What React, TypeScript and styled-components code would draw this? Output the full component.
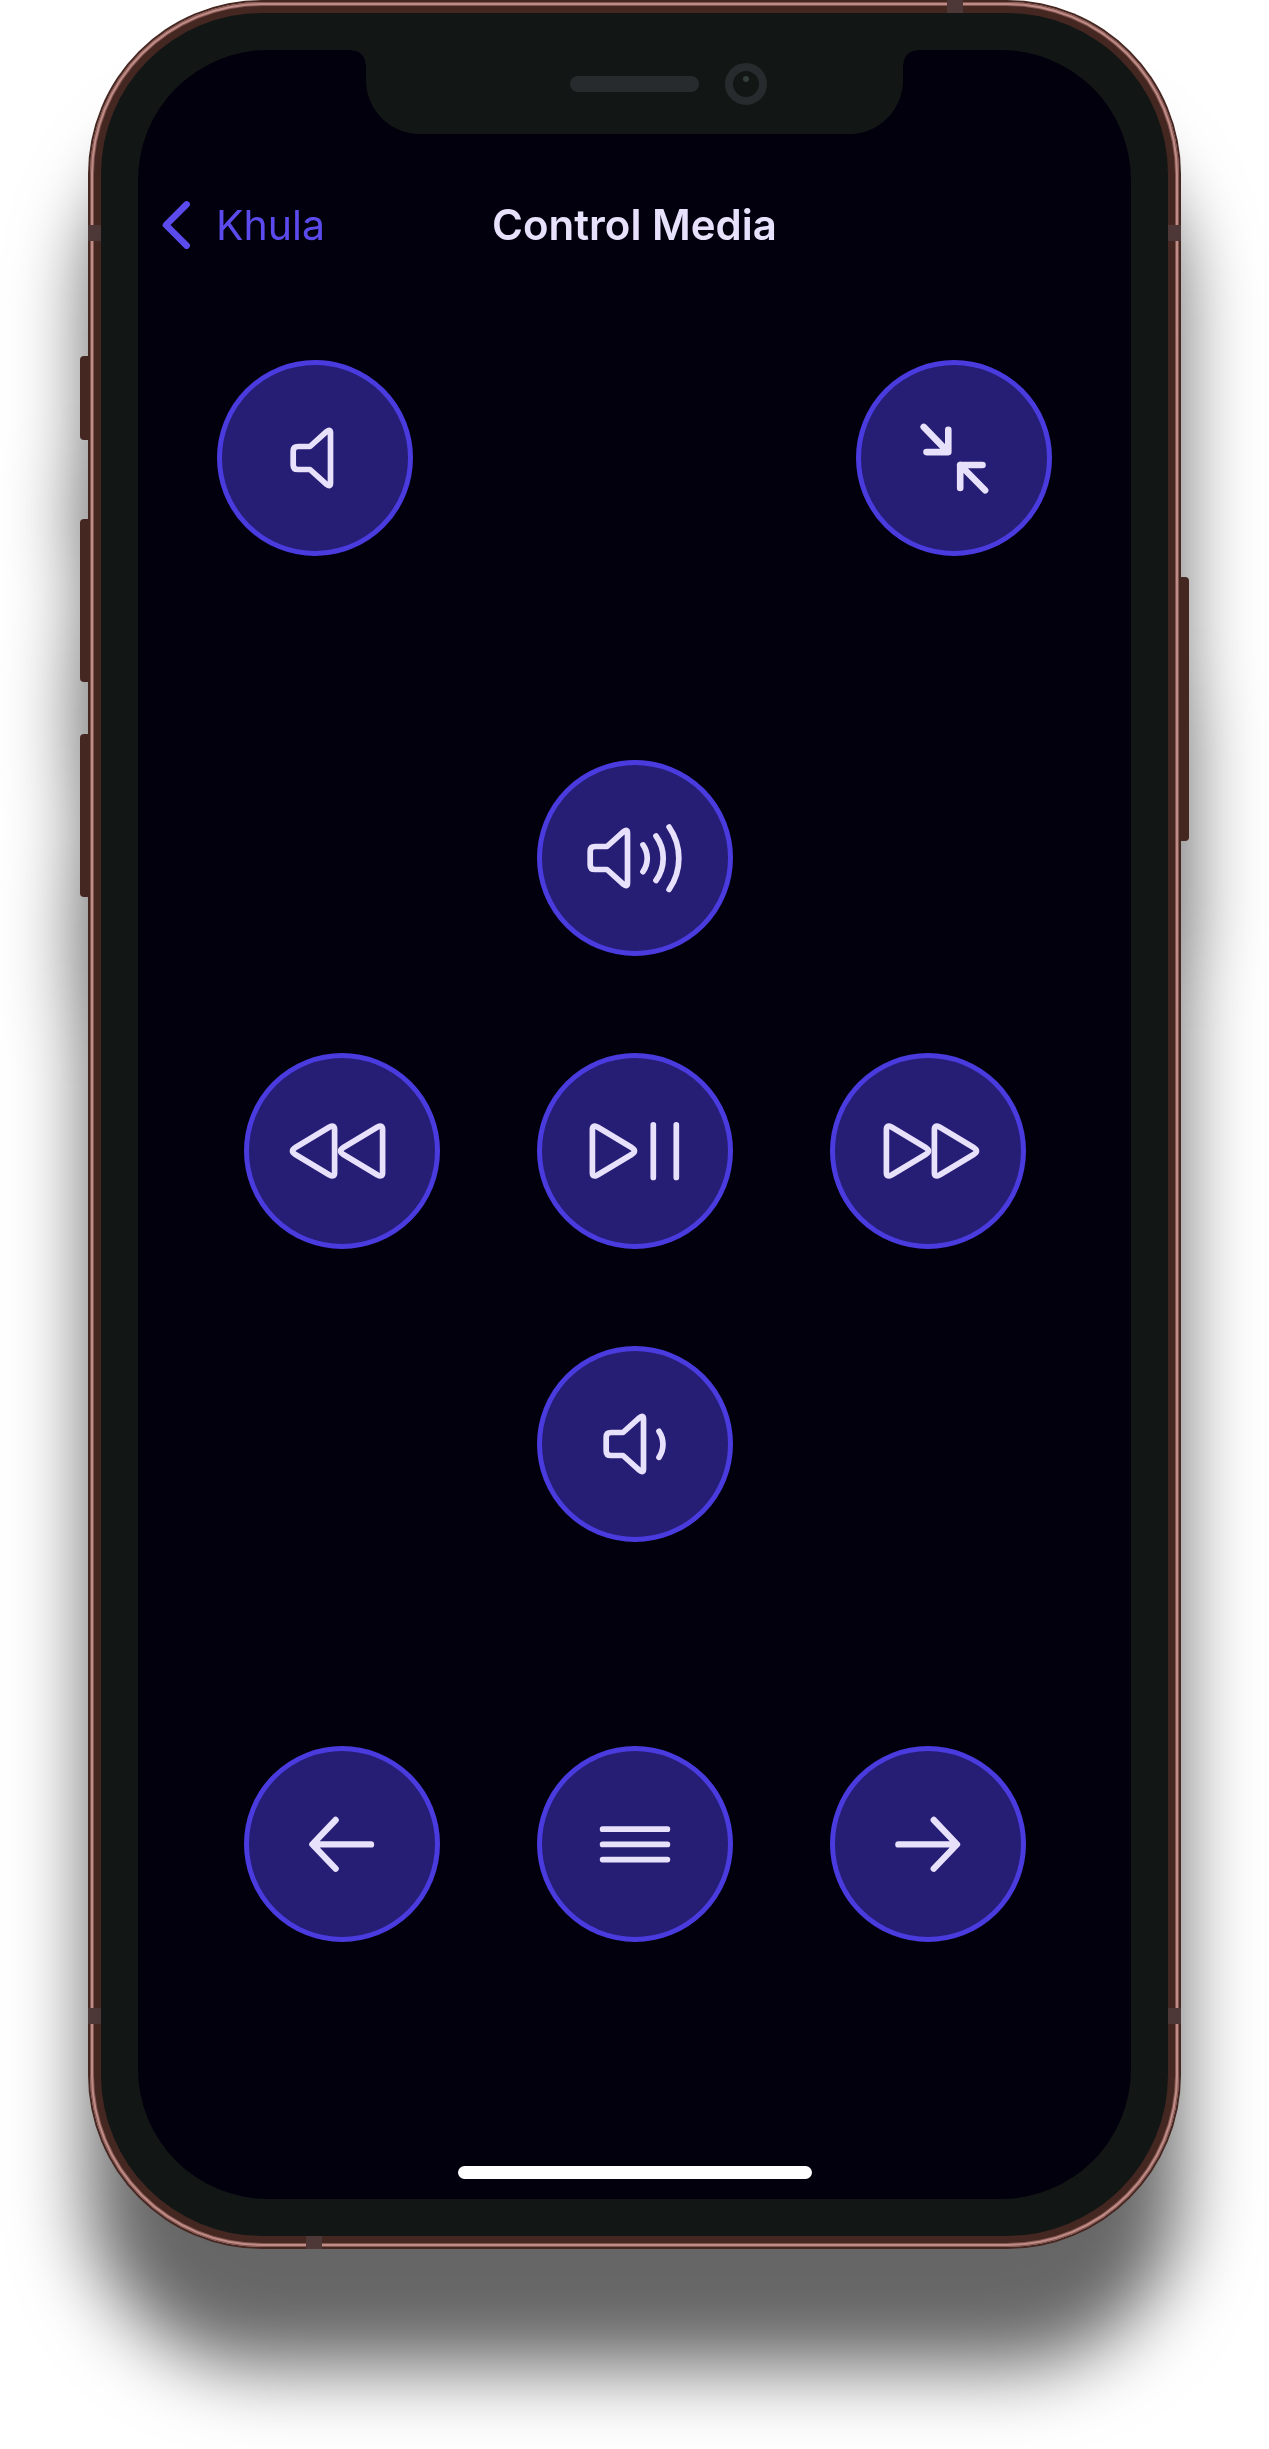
import React from "react";
import styled, { createGlobalStyle } from "styled-components";

const color = {
  screen: "#02000d",
  bezel: "#121716",
  frame: "#452722",
  frameMid: "#83554f",
  frameShine: "#c08c87",
  band: "#4d3737",
  sensor: "#272b2d",
  accent: "#5b4bec",
  ring: "#4a3bdf",
  fill: "#261d75",
  ink: "#e7e1fc",
};

const GlobalStyle = createGlobalStyle`
  *, *::before, *::after { box-sizing: border-box; }
  body {
    margin: 0;
    background: #fff;
    font-family: Inter, "Liberation Sans", sans-serif;
  }
`;

const Stage = styled.div`
  padding: 0 88px 200px;
  overflow: hidden;
`;

const Phone = styled.div`
  position: relative;
  padding: 13px;
  border-radius: 174px;
  background: ${color.frame};
  filter: drop-shadow(0 118px 38px rgba(0, 0, 0, 0.6));
`;

const Shine = styled.div`
  position: absolute;
  inset: 2px;
  border-radius: 172px;
  box-shadow:
    inset 0 0 0 1px ${color.frameMid},
    inset 0 0 0 3px ${color.frameShine},
    inset 0 0 0 4px ${color.frameMid};
`;

const SideKey = styled.span<{ $side: "left" | "right"; $top: number; $length: number }>`
  position: absolute;
  ${(p) => p.$side}: -8px;
  top: ${(p) => p.$top}px;
  width: 8px;
  height: ${(p) => p.$length}px;
  background: ${color.frame};
  border-radius: ${(p) => (p.$side === "left" ? "4px 0 0 4px" : "0 4px 4px 0")};
`;

const SideBand = styled.span<{ $side: "left" | "right"; $end: "top" | "bottom" }>`
  position: absolute;
  ${(p) => p.$side}: 0;
  ${(p) => p.$end}: 225px;
  width: 13px;
  height: 16px;
  background: ${color.band};
`;

const EdgeBand = styled.span<{ $side: "left" | "right"; $end: "top" | "bottom" }>`
  position: absolute;
  ${(p) => p.$end}: 0;
  ${(p) => p.$side}: 218px;
  width: 16px;
  height: 13px;
  background: ${color.band};
`;

const Bezel = styled.div`
  position: relative;
  padding: 37px;
  border-radius: 161px;
  background: ${color.bezel};
`;

const Screen = styled.div`
  display: flex;
  flex-direction: column;
  padding-bottom: 20px;
  border-radius: 130px;
  background: ${color.screen};
`;

const Notch = styled.div`
  position: relative;
  align-self: center;
  display: grid;
  grid-template-columns: 1fr auto 1fr;
  align-items: center;
  column-gap: 26px;
  width: 537px;
  height: 84px;
  padding-bottom: 16px;
  border-radius: 0 0 54px 54px;
  background: ${color.bezel};

  &::before,
  &::after {
    content: "";
    position: absolute;
    top: 0;
    width: 14px;
    height: 14px;
  }
  &::before {
    right: 100%;
    background: radial-gradient(circle at 0 100%, transparent 13px, ${color.bezel} 14px);
  }
  &::after {
    left: 100%;
    background: radial-gradient(circle at 100% 100%, transparent 13px, ${color.bezel} 14px);
  }
`;

const Speaker = styled.span`
  grid-column: 2;
  width: 129px;
  height: 16px;
  border-radius: 8px;
  background: ${color.sensor};
`;

const Camera = styled.span`
  display: flex;
  justify-content: center;
  width: 42px;
  height: 42px;
  padding-top: 5px;
  border: 8px solid ${color.sensor};
  border-radius: 50%;

  &::after {
    content: "";
    width: 6px;
    height: 6px;
    border-radius: 50%;
    background: #333d3b;
  }
`;

const Header = styled.header`
  display: grid;
  grid-template-columns: 1fr auto 1fr;
  align-items: center;
  height: 90px;
  margin-top: 46px;
  padding: 0 24px;
  line-height: 50px;
`;

const BackLink = styled.a`
  display: flex;
  align-items: center;
  gap: 26px;
  font-size: 41px;
  color: ${color.accent};
  text-decoration: none;
`;

const Title = styled.h1`
  margin: 0;
  font-size: 42px;
  font-weight: 600;
  color: ${color.ink};
`;

const Pad = styled.main`
  display: flex;
  flex-direction: column;
  gap: 204px;
  padding: 90px 79px 224px;
`;

const Corners = styled.div`
  display: flex;
  justify-content: space-between;
`;

const Cross = styled.div`
  display: flex;
  flex-direction: column;
  gap: 97px;
`;

const Row = styled.div`
  display: flex;
  justify-content: center;
  gap: 97px;
`;

const RoundButton = styled.button`
  display: flex;
  flex: none;
  align-items: center;
  justify-content: center;
  width: 196px;
  height: 196px;
  padding: 0;
  border: 5px solid ${color.ring};
  border-radius: 50%;
  background: ${color.fill};
  color: ${color.ink};
  cursor: pointer;
`;

const HomeBar = styled.div`
  align-self: center;
  width: 354px;
  height: 13px;
  border-radius: 7px;
  background: #fff;
`;

const Strokes = styled.svg<{ $weight: number }>`
  fill: none;
  stroke: currentColor;
  stroke-width: ${(p) => p.$weight};
  stroke-linecap: round;
  stroke-linejoin: round;
`;

function Icon({ weight = 5.7, children }: { weight?: number; children: React.ReactNode }) {
  return (
    <Strokes $weight={weight} width="120" height="120" viewBox="-60 -60 120 120" aria-hidden="true">
      {children}
    </Strokes>
  );
}

function Cone({ shift = 0 }: { shift?: number }) {
  return (
    <path
      transform={`translate(${shift} 0)`}
      d="M-17-11.5H-5L11.5-26.3Q15.5-29.5 15.5-25V25Q15.5 29.5 11.5 26.3L-5 11.5H-17Q-21.8 11.5-21.8 7V-7Q-21.8-11.5-17-11.5Z"
    />
  );
}

function Triangle({ shift = 0 }: { shift?: number }) {
  return (
    <path
      transform={`translate(${shift} 0)`}
      d="M-12.5-24Q-7.4-26.7-7.4-21.5V21.5Q-7.4 26.7-12.5 24L-47 3.2Q-52 0-47-3.2Z"
    />
  );
}

function ControlButton({ label, children }: { label: string; children: React.ReactNode }) {
  return (
    <RoundButton type="button" aria-label={label}>
      {children}
    </RoundButton>
  );
}

export default function App() {
  return (
    <>
      <GlobalStyle />
      <Stage>
        <Phone>
          <SideKey $side="left" $top={356} $length={84} />
          <SideKey $side="left" $top={519} $length={163} />
          <SideKey $side="left" $top={734} $length={163} />
          <SideKey $side="right" $top={577} $length={264} />
          <Shine />
          <SideBand $side="left" $end="top" />
          <SideBand $side="right" $end="top" />
          <SideBand $side="left" $end="bottom" />
          <SideBand $side="right" $end="bottom" />
          <EdgeBand $side="right" $end="top" />
          <EdgeBand $side="left" $end="bottom" />
          <Bezel>
            <Screen>
              <Notch>
                <Speaker />
                <Camera />
              </Notch>
              <Header>
                <BackLink href="#khula">
                  <Strokes $weight={6.6} width="28" height="48" viewBox="0 0 28 48" aria-hidden="true">
                    <path d="M24.6 3.4L4 24L24.6 44.6" />
                  </Strokes>
                  Khula
                </BackLink>
                <Title>Control Media</Title>
              </Header>
              <Pad>
                <Corners>
                  <ControlButton label="Mute">
                    <Icon>
                      <Cone />
                    </Icon>
                  </ControlButton>
                  <ControlButton label="Exit full screen">
                    <Icon weight={6.6}>
                      <path d="M-30.3-31.1L-5.9-5.9M-5.7-28.3V-5.9H-27.5" />
                      <path d="M31.1 32.3L6.2 7M28.5 7H6.2V30" />
                    </Icon>
                  </ControlButton>
                </Corners>
                <Cross>
                  <Row>
                    <ControlButton label="Volume up">
                      <Icon>
                        <Cone shift={-23} />
                        <path d="M8-13.1A23.3 23.3 0 0 1 8 13.7" />
                        <path d="M21-22A38 38 0 0 1 21 22.5" />
                        <path d="M34.1-31A55 55 0 0 1 34.1 31.5" />
                      </Icon>
                    </ControlButton>
                  </Row>
                  <Row>
                    <ControlButton label="Rewind">
                      <Icon>
                        <Triangle />
                        <Triangle shift={48} />
                      </Icon>
                    </ControlButton>
                    <ControlButton label="Play or pause">
                      <Icon>
                        <g transform="scale(-1 1)">
                          <Triangle shift={50} />
                        </g>
                        <path d="M18.3-26.2V26.5M41.3-26.2V26.5" />
                      </Icon>
                    </ControlButton>
                    <ControlButton label="Fast forward">
                      <Icon>
                        <g transform="scale(-1 1)">
                          <Triangle shift={1} />
                          <Triangle shift={49} />
                        </g>
                      </Icon>
                    </ControlButton>
                  </Row>
                  <Row>
                    <ControlButton label="Volume down">
                      <Icon>
                        <Cone shift={-7} />
                        <path d="M24-12.7A23.3 23.3 0 0 1 24 13.3" />
                      </Icon>
                    </ControlButton>
                  </Row>
                </Cross>
                <Row>
                  <ControlButton label="Previous">
                    <Icon weight={6.4}>
                      <path d="M29 .4H-29M-6.4-24L-29.6 .4L-6.4 24.6" />
                    </Icon>
                  </ControlButton>
                  <ControlButton label="Menu">
                    <Icon>
                      <path d="M-32.4-14.8H32.4M-32.4 .4H32.4M-32.4 15.6H32.4" />
                    </Icon>
                  </ControlButton>
                  <ControlButton label="Next">
                    <Icon weight={6.4}>
                      <path d="M-29.6 .4H28.6M5.8-24L29 .4L5.8 24.6" />
                    </Icon>
                  </ControlButton>
                </Row>
              </Pad>
              <HomeBar />
            </Screen>
          </Bezel>
        </Phone>
      </Stage>
    </>
  );
}
